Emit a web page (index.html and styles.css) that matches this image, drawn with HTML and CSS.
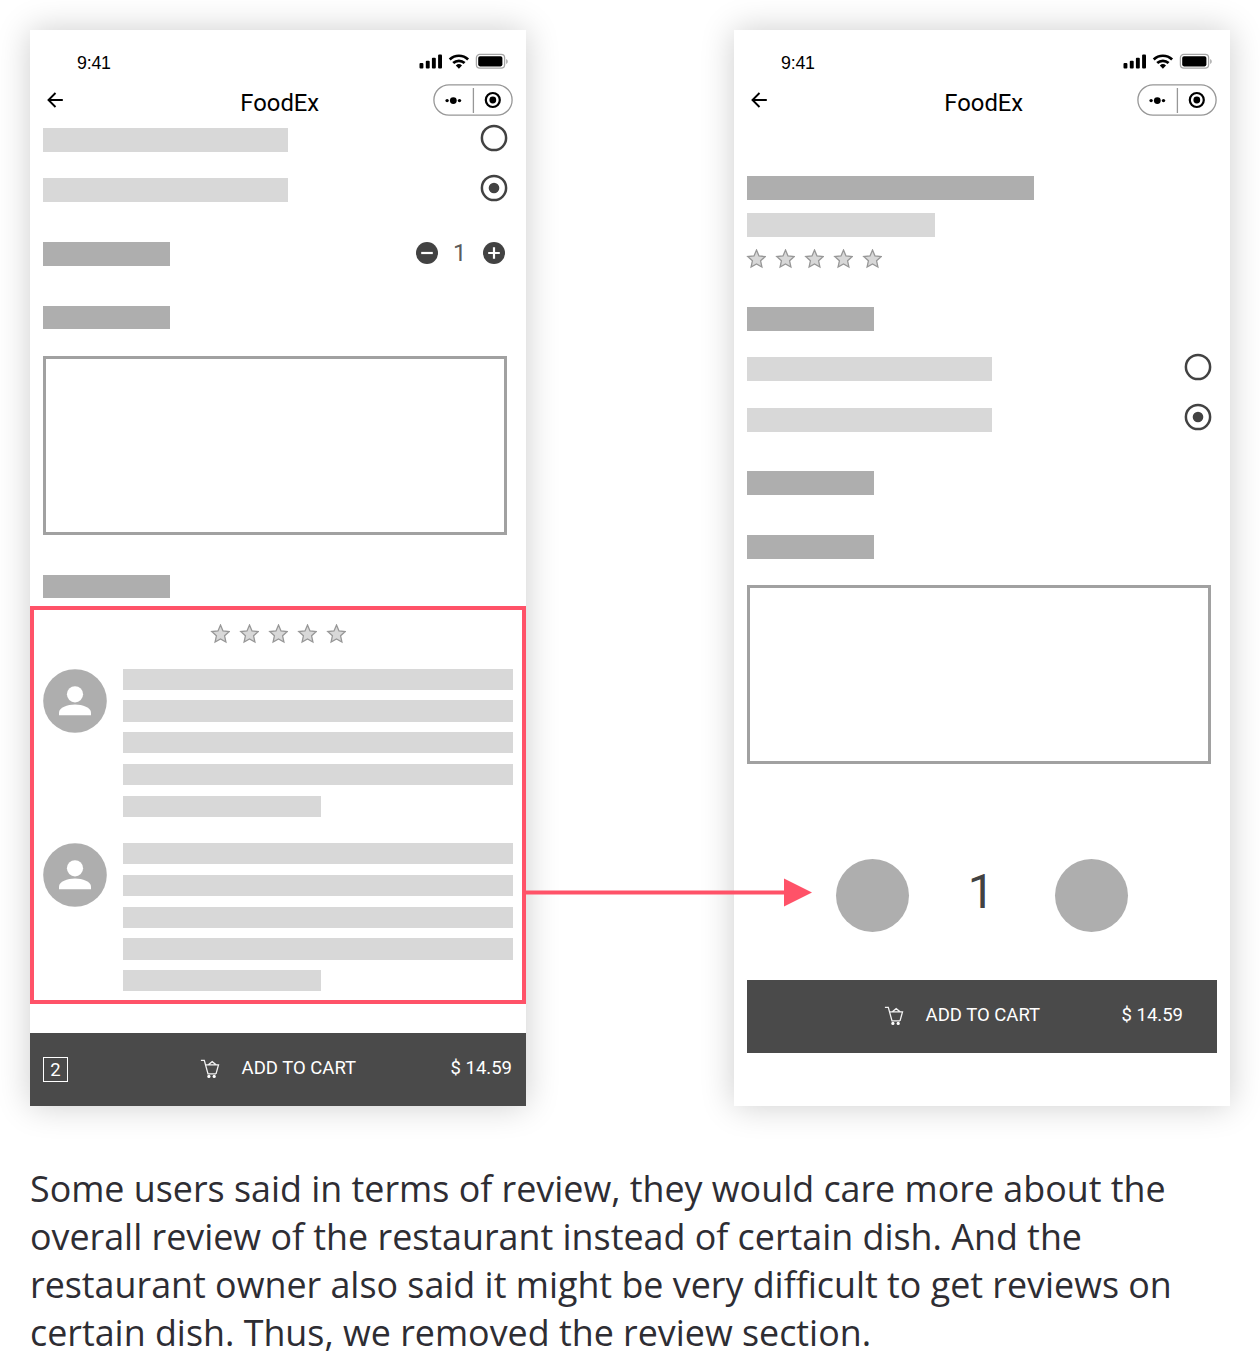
FILE: index.html
```html
<!DOCTYPE html>
<html lang="en">
<head>
<meta charset="utf-8">
<title>FoodEx dish page</title>
<link rel="stylesheet" href="styles.css">
</head>
<body>
<svg class="defs" width="0" height="0">
  <symbol id="status" viewBox="0 0 94 20">
    <rect x="1.5" y="11" width="3.9" height="5.6" rx="1"/><rect x="7.8" y="8.7" width="3.9" height="7.9" rx="1"/><rect x="13.9" y="5.8" width="3.9" height="10.8" rx="1"/><rect x="20.1" y="2.5" width="3.9" height="14.1" rx="1"/>
    <g fill="none" stroke="#000" stroke-width="2.7"><path d="M31.7 7.5a13.2 13.2 0 0 1 18.4 0"/><path d="M35.2 11.1a8.3 8.3 0 0 1 11.4 0"/></g>
    <path d="M37.8 13.5a4.6 4.6 0 0 1 6.2 0l-3.1 3.3z"/>
    <rect x="58.4" y="2.4" width="28.2" height="13.8" rx="3.4" fill="none" stroke="#a6a6a6" stroke-width="1.3"/>
    <rect x="60.2" y="4.2" width="24.2" height="10.2" rx="1.8"/>
    <path d="M88.2 7v5c2-.8 2-4.2 0-5z" fill="#a6a6a6"/>
  </symbol>
  <symbol id="back" viewBox="0 0 18 18"><path d="M16.8 9H2.5M9.5 2l-7 7 7 7" fill="none" stroke="#000" stroke-width="1.9"/></symbol>
  <symbol id="capsule" viewBox="0 0 80 32">
    <rect x=".9" y=".9" width="78.2" height="30.2" rx="15.1" fill="#fff" stroke="#979797" stroke-width="1.3"/>
    <path d="M40.4 4v25" stroke="#979797" stroke-width="1.3"/>
    <circle cx="14.1" cy="16.6" r="1.7"/><circle cx="20.3" cy="16.6" r="3.4"/><circle cx="26.5" cy="16.6" r="1.7"/>
    <circle cx="59.8" cy="16" r="7" fill="none" stroke="#000" stroke-width="2.2"/><circle cx="59.8" cy="16" r="3.4"/>
  </symbol>
  <symbol id="radio" viewBox="0 0 28 28"><circle cx="14" cy="14" r="12.1" fill="none" stroke="#424242" stroke-width="2.5"/></symbol>
  <symbol id="radio-on" viewBox="0 0 28 28"><circle cx="14" cy="14" r="12.1" fill="none" stroke="#424242" stroke-width="2.5"/><circle cx="14" cy="14" r="5.3" fill="#424242"/></symbol>
  <symbol id="minus" viewBox="0 0 22 22"><circle cx="11" cy="11" r="11" fill="#424242"/><path d="M5.2 11h11.6" stroke="#fff" stroke-width="2.2"/></symbol>
  <symbol id="plus" viewBox="0 0 22 22"><circle cx="11" cy="11" r="11" fill="#424242"/><path d="M5.2 11h11.6M11 5.2v11.6" stroke="#fff" stroke-width="2.2"/></symbol>
  <symbol id="star" viewBox="0 0 20 20"><path d="M10.5 1.1l2.5 5.9 6.2.6-4.6 4.2 1.3 6.2-5.4-3.1L5.1 18l1.3-6.2-4.6-4.2L8 7z" fill="#d8d8d8" stroke="#979797" stroke-width="1.3"/></symbol>
  <symbol id="person" viewBox="0 0 64 64"><circle cx="32" cy="32" r="31.8" fill="#aeaeae"/><circle cx="32" cy="25.3" r="8.1" fill="#fff"/><path d="M16 46.3v-2.6c0-5.2 8.4-8.2 16-8.2s16 3 16 8.2v2.6z" fill="#fff"/></symbol>
  <symbol id="cart" viewBox="0 0 20 20"><path d="M.9 1.3h3.4L8 14.9h8M5.6 5.9h12.9L16 14.9M8 6.1l4.2-3.4 4.2 3.4" fill="none" stroke="#f2f2f2" stroke-width="1.3"/><circle cx="8.9" cy="17.4" r="1.6" fill="#fff"/><circle cx="14.2" cy="17.4" r="1.6" fill="#fff"/></symbol>
</svg>

<main class="page">
  <div class="screens">
    <section class="phone">
      <header>
        <div class="status"><span>9:41</span><svg><use href="#status"/></svg></div>
        <div class="nav"><svg class="back"><use href="#back"/></svg><h1>FoodEx</h1><svg class="capsule"><use href="#capsule"/></svg></div>
      </header>
      <div class="row first"><i class="bar option"></i><svg class="radio"><use href="#radio"/></svg></div>
      <div class="row next"><i class="bar option"></i><svg class="radio"><use href="#radio-on"/></svg></div>
      <div class="row group"><i class="bar label"></i>
        <div class="stepper"><svg><use href="#minus"/></svg><span>1</span><svg><use href="#plus"/></svg></div>
      </div>
      <div class="row group"><i class="bar label"></i></div>
      <div class="note"></div>
      <div class="row group"><i class="bar label"></i></div>
      <div class="reviews">
        <div class="stars"><svg><use href="#star"/></svg><svg><use href="#star"/></svg><svg><use href="#star"/></svg><svg><use href="#star"/></svg><svg><use href="#star"/></svg></div>
        <article class="review"><svg><use href="#person"/></svg><div class="lines"><i></i><i></i><i></i><i></i><i class="short"></i></div></article>
        <article class="review"><svg><use href="#person"/></svg><div class="lines"><i></i><i></i><i></i><i></i><i class="short"></i></div></article>
      </div>
      <footer class="cta docked"><span class="count">2</span><svg><use href="#cart"/></svg><span class="add">ADD TO CART</span><span class="price">$ 14.59</span></footer>
    </section>

    <svg class="arrow" viewBox="0 0 286 28"><path d="M0 14.5h260" stroke="#ff5268" stroke-width="4"/><path d="M258 .6v27.8L286 14.5z" fill="#ff5268"/></svg>

    <section class="phone">
      <header>
        <div class="status"><span>9:41</span><svg><use href="#status"/></svg></div>
        <div class="nav"><svg class="back"><use href="#back"/></svg><h1>FoodEx</h1><svg class="capsule"><use href="#capsule"/></svg></div>
      </header>
      <div class="row title"><i class="bar heading"></i></div>
      <div class="row subtitle"><i class="bar sub"></i></div>
      <div class="stars rating"><svg><use href="#star"/></svg><svg><use href="#star"/></svg><svg><use href="#star"/></svg><svg><use href="#star"/></svg><svg><use href="#star"/></svg></div>
      <div class="row choices"><i class="bar label"></i></div>
      <div class="row next"><i class="bar option"></i><svg class="radio"><use href="#radio"/></svg></div>
      <div class="row next"><i class="bar option"></i><svg class="radio"><use href="#radio-on"/></svg></div>
      <div class="row group"><i class="bar label"></i></div>
      <div class="row group"><i class="bar label"></i></div>
      <div class="note"></div>
      <div class="quantity"><i></i><span>1</span><i></i></div>
      <footer class="cta inset"><svg><use href="#cart"/></svg><span class="add">ADD TO CART</span><span class="price">$ 14.59</span></footer>
    </section>
  </div>
  <p class="caption">Some users said in terms of review, they would care more about the<br>overall review of the restaurant instead of certain dish. And the<br>restaurant owner also said it might be very difficult to get reviews on<br>certain dish. Thus, we removed the review section.</p>
</main>
</body>
</html>
```
FILE: styles.css
```css
* { box-sizing: border-box; }
body { margin: 0; background: #fff; font-family: Roboto, sans-serif; }
svg { display: block; flex: none; overflow: visible; }
.defs { position: absolute; }
.page { padding: 30px 30px 0; }
.screens { position: relative; display: flex; justify-content: space-between; }

.phone {
  width: 496px;
  height: 1076px;
  display: flex;
  flex-direction: column;
  background: #fff;
  box-shadow: 0 0 32px rgba(0, 0, 0, .2);
}
header { height: 86px; flex: none; }
.status { height: 54px; padding: 22px 14px 0 47px; display: flex; justify-content: space-between; }
.status span { font: 17.8px/22px "Liberation Sans", Arial, sans-serif; letter-spacing: -.2px; }
.status svg { width: 94px; height: 20px; margin-top: -.4px; }
.nav { height: 32px; padding: 0 13px 0 16px; display: flex; justify-content: space-between; align-items: center; }
.nav h1 { flex: 1; margin: 6px 0 0 62.5px; text-align: center; font-size: 23.8px; line-height: 28px; font-weight: 400; }
.back { width: 18px; height: 18px; }
.capsule { width: 80px; height: 32px; }

.row { height: 23.8px; flex: none; padding: 0 18px 0 13.3px; display: flex; justify-content: space-between; align-items: flex-start; }
.bar { height: 23.8px; background: #aeaeae; }
.option { width: 244.7px; background: #d8d8d8; }
.label { width: 127px; }
.heading { width: 286.5px; }
.sub { width: 188px; background: #d8d8d8; }
.first { margin-top: 12.2px; }
.next { margin-top: 26.5px; }
.group { margin-top: 39.8px; }
.title { margin-top: 60px; }
.subtitle { margin-top: 13.2px; }
.choices { margin-top: 38.2px; }
.radio { width: 28px; height: 28px; margin-top: -4.6px; }
.stepper { display: flex; align-items: center; height: 22px; margin: -.2px 3px 0 0; }
.stepper svg { width: 22px; height: 22px; }
.stepper span { width: 45px; padding: 1px 1.4px 0 0; text-align: center; font-size: 23.8px; line-height: 22px; color: #5c5c5c; }
.note { width: 464px; height: 179px; flex: none; margin: 26.4px 0 0 13.3px; border: 3px solid #a1a1a1; }

.reviews { height: 398px; flex: none; margin-top: 7.3px; padding: 14px 9px 0; border: 4px solid #ff5268; }
.stars { display: flex; justify-content: center; gap: 9.1px; height: 20px; }
.stars svg { width: 20px; height: 20px; }
.rating { justify-content: flex-start; margin: 12.2px 0 0 12px; flex: none; }
.review { display: flex; gap: 16px; margin-top: 26.4px; }
.reviews .stars + .review { margin-top: 25px; }
.review svg { width: 64px; height: 64px; }
.lines { flex: 1; display: flex; flex-direction: column; gap: 10.6px; }
.lines i { height: 21.15px; background: #d8d8d8; }
.lines .short { width: 198.4px; }

.cta { height: 73px; flex: none; display: flex; align-items: center; background: #4a4a4a; color: #fff; font-size: 18.5px; line-height: 24px; }
.cta svg { width: 20px; height: 20px; }
.add { margin-left: 21.6px; }
.price { margin-left: auto; }
.docked { margin-top: auto; padding: 0 14px 3px 13px; }
.count { width: 25px; height: 25px; margin-top: 2px; border: 1.5px solid #fff; text-align: center; line-height: 24px; }
.docked svg { margin: 1px 0 0 132px; }
.inset { width: 470px; margin: auto 13px 53px; padding: 0 34px 3px 137px; }
.inset svg { margin-top: 1px; }
.quantity { display: flex; justify-content: space-between; margin: 95px 102px 0; height: 73px; flex: none; }
.quantity i { width: 73px; border-radius: 50%; background: #aeaeae; }
.quantity span { padding-right: 2px; font-size: 47.6px; line-height: 67px; color: #424242; }

.arrow { position: absolute; left: 496px; top: 848px; width: 286px; height: 28px; z-index: 1; }
.caption { margin: 59px 0 0; font: 35.85px/48px "Open Sans", sans-serif; color: #2e2d33; white-space: nowrap; }
```
